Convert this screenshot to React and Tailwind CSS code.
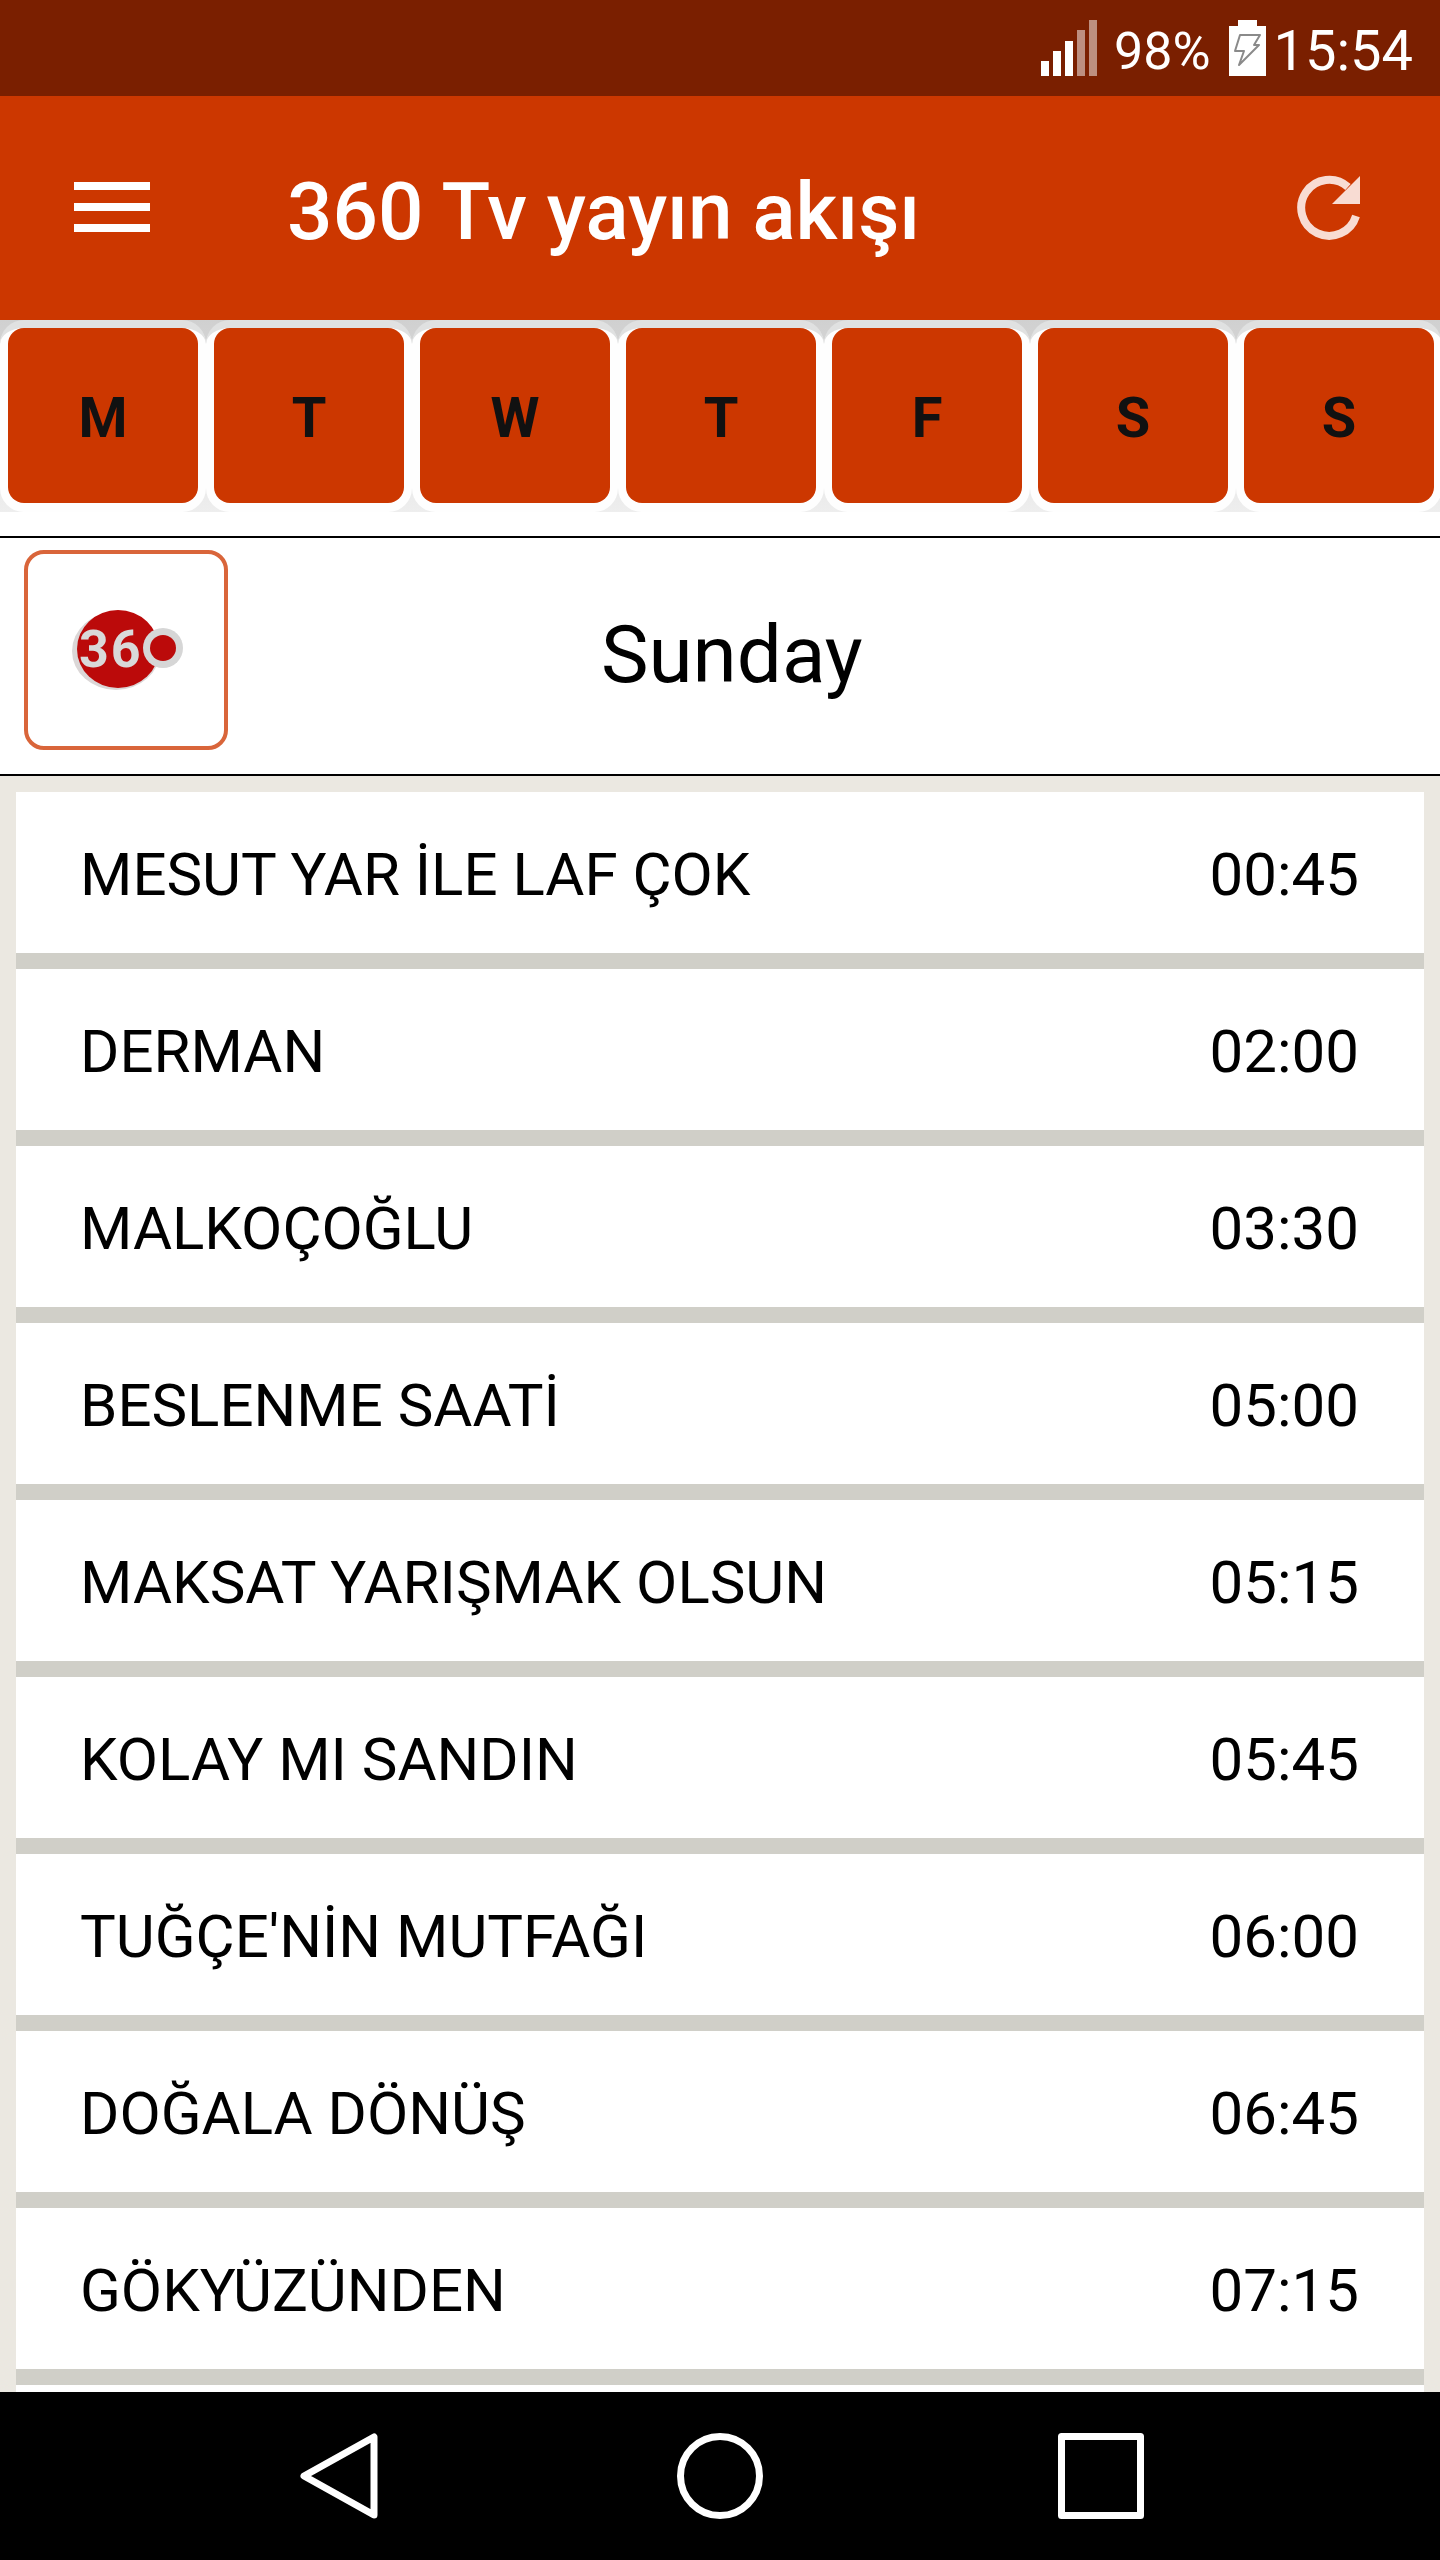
import React from 'react';

const days = ['M', 'T', 'W', 'T', 'F', 'S', 'S'];

const programs = [
  { title: 'MESUT YAR İLE LAF ÇOK', time: '00:45' },
  { title: 'DERMAN', time: '02:00' },
  { title: 'MALKOÇOĞLU', time: '03:30' },
  { title: 'BESLENME SAATİ', time: '05:00' },
  { title: 'MAKSAT YARIŞMAK OLSUN', time: '05:15' },
  { title: 'KOLAY MI SANDIN', time: '05:45' },
  { title: "TUĞÇE'NİN MUTFAĞI", time: '06:00' },
  { title: 'DOĞALA DÖNÜŞ', time: '06:45' },
  { title: 'GÖKYÜZÜNDEN', time: '07:15' },
];

const StatusBar = () => (
  <div className="flex h-[96px] items-center justify-end bg-[#7a1f00] pr-[27px] text-white">
    <svg width="56" height="56" viewBox="0 0 56 56">
      <rect x="0" y="41" width="8" height="15" fill="#fff" />
      <rect x="12" y="31" width="8" height="25" fill="#fff" />
      <rect x="24" y="21" width="8" height="35" fill="#fff" />
      <rect x="36" y="10" width="8" height="46" fill="#fff" fillOpacity="0.5" />
      <rect x="48" y="0" width="8" height="56" fill="#fff" fillOpacity="0.5" />
    </svg>
    <span className="ml-[17px] mt-[8px] text-[52px] leading-none">98%</span>
    <svg width="37" height="56" viewBox="0 0 37 56" className="ml-[18px]">
      <path d="M0 6h9V0h19v6h9v50H0z" fill="#fff" />
      <path d="M11 15h20l-6 10h5L10 45l5-14H6z" fill="none" stroke="#8a8a8a" strokeWidth="2" strokeLinejoin="round" />
    </svg>
    <span className="ml-[8px] mt-[6px] text-[56px] leading-none">15:54</span>
  </div>
);

const AppBar = () => (
  <div className="flex h-[224px] items-center bg-[#cc3700] text-white">
    <div className="mb-[2px] ml-[74px] flex w-[76px] flex-col gap-[13px]">
      <div className="h-[8px] bg-white" />
      <div className="h-[8px] bg-white" />
      <div className="h-[8px] bg-white" />
    </div>
    <h1 className="ml-[137px] mt-[8px] text-[80px] leading-none font-medium">360 Tv yayın akışı</h1>
    <svg width="66" height="66" viewBox="0 0 66 66" className="ml-auto mr-[79px] mb-[1px]" fill="none">
      <path d="M53 12A28 28 0 1 0 61 41" stroke="#f8dcd3" strokeWidth="8" />
      <path d="M65 1v28H37z" fill="#f8dcd3" />
    </svg>
  </div>
);

const DayRow = () => (
  <div className="flex h-[192px] overflow-hidden bg-linear-to-b from-[#d0d0d0] to-[#eeeeee]">
    {days.map((day, index) => (
      <div key={index} className="h-[192px] w-[206px] shrink-0 rounded-[24px] border-t-8 border-[#e0e1e1] bg-[#fefefe] px-[8px]">
        <div className="flex h-[175px] w-[190px] items-center justify-center rounded-[16px] bg-[#cc3700] pt-[5px] font-bold text-[56px] text-[#111]">
          {day}
        </div>
      </div>
    ))}
  </div>
);

// the channel badge: red disc, "36" in silver, and the ring that makes the 0
const Logo = () => (
  <svg width="112" height="82" viewBox="0 0 112 82" className="ml-[4px] blur-[0.5px]">
    <ellipse cx="44" cy="42" rx="44" ry="39" fill="#dbd7d7" />
    <ellipse cx="46" cy="40" rx="41" ry="39" fill="#bb0a0a" />
    <circle cx="91" cy="39" r="20" fill="#d6d6d6" />
    <circle cx="91" cy="39" r="13" fill="#bb0a0a" />
    <text x="7" y="58" fontFamily="Roboto, sans-serif" fontSize="52" fontWeight="700" letterSpacing="2" fill="#d9d9d9">36</text>
  </svg>
);

const DayHeader = () => (
  <div className="flex h-[240px] border-y-2 border-black bg-white pl-[24px] pt-[12px]">
    <div className="flex h-[200px] w-[204px] items-center justify-center rounded-[20px] border-4 border-[#d9653a] bg-white">
      <Logo />
    </div>
    <span className="ml-[373px] mt-[65px] text-[80px] leading-none text-black">Sunday</span>
  </div>
);

const ProgramRow = ({ title, time }) => (
  <div className="flex h-[177px] items-center justify-between border-b-16 border-[#d0cfc8] bg-white pl-[64px] pr-[65px] pt-[4px] text-[60px] text-black">
    <span>{title}</span>
    <span>{time}</span>
  </div>
);

const NavBar = () => (
  <div className="flex h-[168px] bg-black pl-[300px] pt-[41px]">
    <svg width="78" height="86" viewBox="0 0 78 86" fill="none" stroke="#fff" strokeWidth="7" strokeLinejoin="round">
      <path d="M4 43L74 4v78z" />
    </svg>
    <svg width="86" height="86" viewBox="0 0 86 86" className="ml-[299px]" fill="none" stroke="#fff" strokeWidth="7">
      <circle cx="43" cy="43" r="39.5" />
    </svg>
    <svg width="86" height="86" viewBox="0 0 86 86" className="ml-[295px]" fill="none" stroke="#fff" strokeWidth="7" strokeLinejoin="round">
      <rect x="3.5" y="3.5" width="79" height="79" />
    </svg>
  </div>
);

export default function App() {
  return (
    <div className="flex h-[2560px] w-[1440px] flex-col overflow-hidden font-['Roboto',sans-serif]">
      <StatusBar />
      <AppBar />
      <DayRow />
      <div className="h-[24px] bg-white" />
      <DayHeader />
      <div className="min-h-0 flex-1 overflow-hidden bg-[#ebe8e1] px-[16px] pt-[16px]">
        {programs.map((program) => (
          <ProgramRow key={program.title} {...program} />
        ))}
        <div className="h-[40px] bg-white" />
      </div>
      <NavBar />
    </div>
  );
}
